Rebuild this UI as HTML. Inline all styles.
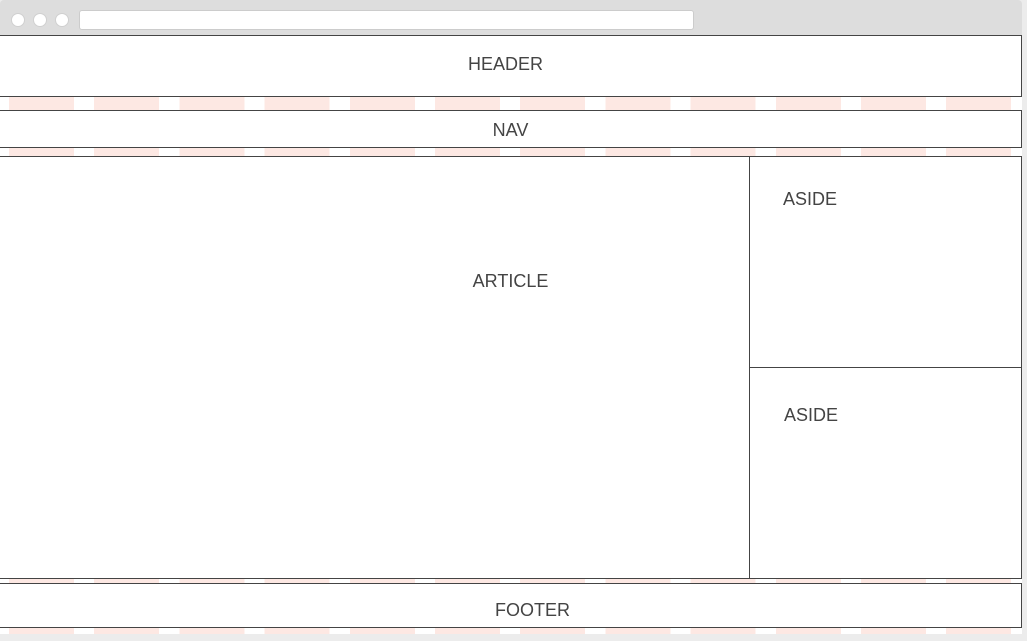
<!DOCTYPE html>
<html><head><style>
body{margin:0;width:1027px;height:641px;background:#ececec;position:relative;overflow:hidden;font-family:"Liberation Sans",sans-serif;color:#444;font-size:18px}
.top{position:absolute;left:0;top:0;width:1022px;height:35px;background:#dddddd;border-radius:4px 4px 0 0}
.dot{position:absolute;top:13px;width:14px;height:14px;border-radius:50%;background:#fff;border:1px solid #d0d0d0;box-sizing:border-box}
.url{position:absolute;left:79px;top:10px;width:615px;height:20px;background:#fff;border:1px solid #ccc;border-radius:3px;box-sizing:border-box}
.page{position:absolute;left:0;top:35px;width:1022px;height:599px;background-color:#fff;background-image:repeating-linear-gradient(90deg,transparent 0 9px,#fde8e3 9px 74px,transparent 74px 85.2px)}
.b{position:absolute;background:#fff;border:1px solid #444;box-sizing:border-box;display:flex;align-items:center;justify-content:center}
</style></head><body>
<div class="top"><div class="dot" style="left:11px"></div><div class="dot" style="left:33px"></div><div class="dot" style="left:55px"></div><div class="url"></div></div>
<div class="page"></div>
<div class="b" style="left:-1px;top:35px;width:1023px;height:62px;padding:0 10px 4px 0">HEADER</div>
<div class="b" style="left:-1px;top:110px;width:1023px;height:38px;padding-top:2px">NAV</div>
<div class="b" style="left:-1px;top:156px;width:751px;height:423px;align-items:flex-start;padding-top:114px;padding-left:272px">ARTICLE</div>
<div class="b" style="left:749px;top:156px;width:273px;height:212px;align-items:flex-start;justify-content:flex-start;padding:32px 0 0 33px">ASIDE</div>
<div class="b" style="left:749px;top:367px;width:273px;height:212px;align-items:flex-start;justify-content:flex-start;padding:37px 0 0 34px">ASIDE</div>
<div class="b" style="left:-1px;top:583px;width:1023px;height:45px;padding-left:44px;padding-top:10px">FOOTER</div>
</body></html>
